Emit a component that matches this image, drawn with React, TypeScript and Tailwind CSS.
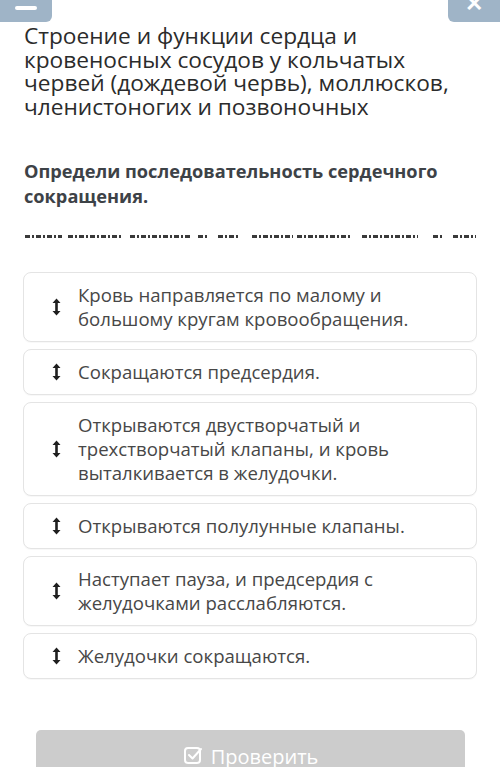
const items = [
  "Кровь направляется по малому и большому кругам кровообращения.",
  "Сокращаются предсердия.",
  "Открываются двустворчатый и трехстворчатый клапаны, и кровь выталкивается в желудочки.",
  "Открываются полулунные клапаны.",
  "Наступает пауза, и предсердия с желудочками расслабляются.",
  "Желудочки сокращаются.",
];

// garbled strike-through row under the question: [start, end] of each dashed word
const words = [
  [25, 62], [68, 122], [130, 190], [198, 208], [218, 240],
  [252, 293], [297, 352], [362, 418], [433, 443], [453, 476],
];

function SortIcon() {
  return (
    <svg width="9" height="18" viewBox="0 0 9 18" className="shrink-0">
      <path d="M4.5 0.5 L8.5 5 L5.8 5 L5.8 13 L8.5 13 L4.5 17.5 L0.5 13 L3.2 13 L3.2 5 L0.5 5 Z" fill="#1f1f1f" />
    </svg>
  );
}

function DashRow() {
  return (
    <div className="flex h-[3px]">
      {words.map(([a, b], i) => (
        <span
          key={i}
          className="h-[3px] bg-[repeating-linear-gradient(90deg,#3a3a3a_0_5px,transparent_5px_7px,#3a3a3a_7px_9px,transparent_9px_11px)]"
          style={{ marginLeft: a - (i ? words[i - 1][1] : 0), width: b - a }}
        />
      ))}
    </div>
  );
}

export default function App() {
  return (
    <div className="relative h-[767px] w-[500px] overflow-hidden bg-white font-['Open_Sans',sans-serif]">
      <div className="absolute left-0 top-0 flex h-[22px] w-[52px] items-center justify-center rounded-br-[6px] bg-[#9fb4c7]">
        <span className="mt-[-6px] h-[4px] w-[22px] rounded-sm bg-white" />
      </div>
      <div className="absolute right-0 top-0 flex h-[22px] w-[52px] justify-center overflow-hidden rounded-bl-[6px] bg-[#9fb4c7]">
        <span className="mt-[-9px] text-[22px] font-bold leading-none text-white">✕</span>
      </div>

      <div className="px-[24px] pt-[24px]">
        <h1 className="text-[22.7px] leading-[23.5px] text-[#2b2b2b]">
          Строение и функции сердца и кровеносных сосудов у кольчатых червей (дождевой червь), моллюсков, членистоногих и позвоночных
        </h1>
        <p className="mt-[41px] text-[18.2px] font-bold leading-[25px] text-[#3d4247]">
          Определи последовательность сердечного сокращения.
        </p>
      </div>
      <div className="mt-[26px]">
        <DashRow />
      </div>

      <div className="mt-[34px] flex flex-col gap-[7px] px-[23px]">
        {items.map((t) => (
          <div
            key={t}
            className="flex items-center gap-[17px] rounded-[8px] border border-[#e4e4e4] bg-white py-[10px] pl-[28px] pr-[44px] shadow-[0_1px_1px_rgba(0,0,0,0.03)]"
          >
            <SortIcon />
            <span className="text-[18.6px] leading-[24px] text-[#474747]">{t}</span>
          </div>
        ))}
      </div>

      <div className="absolute bottom-0 left-[36px] flex h-[37px] w-[429px] items-start justify-center gap-[8px] overflow-hidden rounded-t-[5px] bg-[#cccccc] pt-[15px]">
        <svg width="20" height="20" viewBox="0 0 20 20" fill="none" stroke="white" strokeWidth="2">
          <rect x="2" y="3" width="15" height="15" rx="3" />
          <path d="M6 10 L9.5 13.5 L18 4" strokeLinecap="round" strokeLinejoin="round" />
        </svg>
        <span className="text-[20px] leading-[24px] text-white">Проверить</span>
      </div>
    </div>
  );
}
